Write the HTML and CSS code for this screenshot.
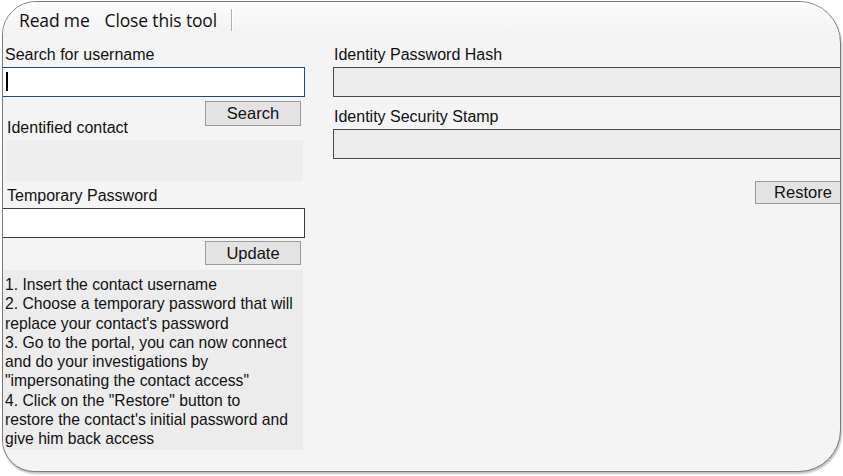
FILE: index.html
```html
<!DOCTYPE html>
<html>
<head>
<meta charset="utf-8">
<link rel="stylesheet" href="styles.css">
</head>
<body>
<div class="frame">
  <div class="menubar">
    <span class="menu-item first">Read me</span>
    <span class="menu-item">Close this tool</span>
    <span class="menu-sep"></span>
  </div>
  <div class="main">
    <div class="col-left">
      <div class="label l-search">Search for username</div>
      <div class="textbox focused"><span class="caret"></span></div>
      <div class="row-search">
        <div class="label l-ident">Identified contact</div>
        <div class="btn btn-search">Search</div>
      </div>
      <div class="readonly-box"></div>
      <div class="label l-temp">Temporary Password</div>
      <div class="textbox plain"></div>
      <div class="row-update">
        <div class="btn btn-update">Update</div>
      </div>
      <div class="instructions">1. Insert the contact username<br>2. Choose a temporary password that will<br>replace your contact's password<br>3. Go to the portal, you can now connect<br>and do your investigations by<br>"impersonating the contact access"<br>4. Click on the "Restore" button to<br>restore the contact's initial password and<br>give him back access</div>
    </div>
    <div class="col-right">
      <div class="label l-hash">Identity Password Hash</div>
      <div class="textbox ro"></div>
      <div class="label l-stamp">Identity Security Stamp</div>
      <div class="textbox ro"></div>
      <div class="row-restore">
        <div class="btn btn-restore">Restore</div>
      </div>
    </div>
  </div>
</div>
</body>
</html>
```
FILE: styles.css
```css
html, body {
  margin: 0;
  padding: 0;
  background: #ffffff;
}
body {
  width: 843px;
  height: 476px;
  overflow: hidden;
  font-family: "Liberation Sans", Arial, sans-serif;
  color: #111111;
}
.frame {
  box-sizing: border-box;
  margin: 1px 0 0 2px;
  width: 839px;
  height: 471px;
  border: 1px solid #7a7a7a;
  border-radius: 34px 42px 42px 32px;
  background: #f4f4f4;
  overflow: hidden;
  box-shadow: 1px 2px 2px rgba(0, 0, 0, 0.25);
}
.menubar {
  height: 35px;
  display: flex;
  align-items: center;
  background: linear-gradient(#fcfcfc, #f2f2f2);
  font-family: "Open Sans", "Noto Sans", sans-serif;
  font-size: 17.5px;
  letter-spacing: -0.15px;
  color: #111;
}
.menu-item {
  padding: 0 7px 0 8px;
  line-height: 24px;
}
.menu-item.first {
  margin-left: 8px;
}
.menu-sep {
  width: 1px;
  height: 22px;
  margin-left: 7px;
  background: #b0b0b0;
  border-right: 1px solid #ffffff;
}
.main {
  display: flex;
  gap: 28px;
  padding-top: 8px;
}
.col-left {
  width: 303px;
  margin-left: -1px;
  flex: none;
  display: flex;
  flex-direction: column;
}
.col-right {
  width: 518px;
  flex: none;
  display: flex;
  flex-direction: column;
}
.label {
  font-size: 16px;
  line-height: 20px;
  height: 20px;
  white-space: nowrap;
}
.l-search {
  padding-left: 3px;
  margin-bottom: 2px;
}
.textbox {
  box-sizing: border-box;
  height: 30px;
  width: 100%;
  background: #ffffff;
  border: 1.5px solid #3c3c3c;
  position: relative;
}
.textbox.focused {
  border-color: #1e4a78;
}
.caret {
  position: absolute;
  left: 3px;
  top: 4px;
  width: 1.5px;
  height: 19px;
  background: #000;
}
.textbox.ro {
  background: #ececec;
  border-color: #4a4a4a;
}
.row-search {
  display: flex;
  justify-content: space-between;
  height: 37px;
  margin-top: 4px;
}
.l-ident {
  align-self: flex-end;
  padding-left: 5px;
}
.btn {
  box-sizing: border-box;
  width: 96px;
  background: #e3e3e3;
  border: 1px solid #9a9a9a;
  font-size: 16.5px;
  text-align: center;
  color: #111;
}
.btn-search {
  height: 25px;
  line-height: 22px;
  margin-right: 4px;
}
.readonly-box {
  margin: 2px 0 0 4px;
  width: 297px;
  height: 41px;
  background: #eeeeee;
}
.l-temp {
  margin-top: 5px;
  padding-left: 5px;
  margin-bottom: 2px;
}
.row-update {
  display: flex;
  justify-content: flex-end;
  margin-top: 3px;
}
.btn-update {
  height: 24px;
  line-height: 23px;
  margin-right: 4px;
}
.instructions {
  margin-top: 5px;
  width: 301px;
  height: 180px;
  box-sizing: border-box;
  background: #ececec;
  padding: 5px 0 0 3px;
  font-size: 15.7px;
  line-height: 19.3px;
  white-space: nowrap;
}
.l-hash {
  padding-left: 1px;
  margin-bottom: 2px;
}
.l-stamp {
  margin-top: 10px;
  padding-left: 1px;
  margin-bottom: 2px;
}
.row-restore {
  display: flex;
  justify-content: flex-end;
  margin-top: 22px;
}
.btn-restore {
  height: 23px;
  line-height: 21px;
}
```
